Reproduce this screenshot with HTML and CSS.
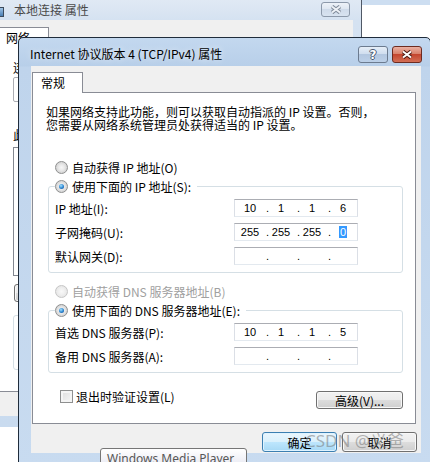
FILE: index.html
```html
<!DOCTYPE html>
<html lang="zh-CN">

<head>
    <meta charset="UTF-8">
    <meta name="viewport" content="width=device-width, initial-scale=1.0">
    <title>Internet 协议版本 4 (TCP/IPv4) 属性</title>
    <link rel="stylesheet" href="styles.css">
</head>

<body>
    <div class="desktop">
        <!-- window behind: 本地连接 属性 -->
        <div class="window back-window">
            <div class="titlebar">
                <span class="app-icon"></span>
                <span class="title">本地连接 属性</span>
                <span class="cap-btn cap-close inactive">
                    <svg width="12" height="9" viewBox="0 0 12 9">
                        <path d="M2 1.5 L10 7.5 M10 1.5 L2 7.5" stroke="#7f8a99" stroke-width="4" />
                        <path d="M2 1.5 L10 7.5 M10 1.5 L2 7.5" stroke="#eef2f7" stroke-width="2" />
                    </svg>
                </span>
            </div>
            <div class="client">
                <div class="tabs">
                    <div class="tab active">网络</div>
                </div>
                <div class="tab-panel back-panel">
                    <div class="line">连接时使用:</div>
                    <div class="textbox"></div>
                    <div class="line gap-26">此连接使用下列项目(O):</div>
                    <div class="listbox"></div>
                    <div class="button small">安装(N)...</div>
                    <div class="plain-group"></div>
                </div>
            </div>
        </div>

        <div class="window side-window"></div>

        <!-- front dialog -->
        <div class="window dialog">
            <div class="titlebar">
                <span class="title">Internet 协议版本 4 (TCP/IPv4) 属性</span>
                <span class="cap-btn cap-help">?</span>
                <span class="cap-btn cap-close">
                    <svg width="12" height="9" viewBox="0 0 12 9">
                        <path d="M2 1.5 L10 7.5 M10 1.5 L2 7.5" stroke="#4d1a12" stroke-width="4" />
                        <path d="M2 1.5 L10 7.5 M10 1.5 L2 7.5" stroke="#ffffff" stroke-width="2" />
                    </svg>
                </span>
            </div>
            <div class="client">
                <div class="tabs">
                    <div class="tab active">常规</div>
                </div>
                <div class="tab-panel">
                    <p class="intro">如果网络支持此功能，则可以获取自动指派的 IP 设置。否则，<br>您需要从网络系统管理员处获得适当的 IP 设置。</p>

                    <label class="radio-row first"><span class="radio"></span>自动获得 IP 地址(O)</label>
                    <fieldset class="group">
                        <legend><label class="radio-row"><span class="radio checked"></span>使用下面的 IP 地址(S):</label></legend>
                        <div class="field-row">
                            <span class="field-label">IP 地址(I):</span>
                            <div class="ip-box"><span class="octet">10</span><span class="dot">.</span><span class="octet">1</span><span class="dot">.</span><span class="octet">1</span><span class="dot">.</span><span class="octet">6</span></div>
                        </div>
                        <div class="field-row">
                            <span class="field-label">子网掩码(U):</span>
                            <div class="ip-box"><span class="octet">255</span><span class="dot">.</span><span class="octet">255</span><span class="dot">.</span><span class="octet">255</span><span class="dot">.</span><span class="octet"><span class="selected">0</span></span></div>
                        </div>
                        <div class="field-row">
                            <span class="field-label">默认网关(D):</span>
                            <div class="ip-box"><span class="octet"></span><span class="dot">.</span><span class="octet"></span><span class="dot">.</span><span class="octet"></span><span class="dot">.</span><span class="octet"></span></div>
                        </div>
                    </fieldset>

                    <label class="radio-row after-group disabled"><span class="radio"></span>自动获得 DNS 服务器地址(B)</label>
                    <fieldset class="group">
                        <legend><label class="radio-row"><span class="radio checked"></span>使用下面的 DNS 服务器地址(E):</label></legend>
                        <div class="field-row">
                            <span class="field-label">首选 DNS 服务器(P):</span>
                            <div class="ip-box"><span class="octet">10</span><span class="dot">.</span><span class="octet">1</span><span class="dot">.</span><span class="octet">1</span><span class="dot">.</span><span class="octet">5</span></div>
                        </div>
                        <div class="field-row">
                            <span class="field-label">备用 DNS 服务器(A):</span>
                            <div class="ip-box"><span class="octet"></span><span class="dot">.</span><span class="octet"></span><span class="dot">.</span><span class="octet"></span><span class="dot">.</span><span class="octet"></span></div>
                        </div>
                    </fieldset>

                    <div class="options-row">
                        <label class="check-row"><span class="checkbox"></span>退出时验证设置(L)</label>
                        <div class="button advanced">高级(V)...</div>
                    </div>
                </div>
                <div class="dialog-buttons">
                    <div class="button default">确定</div>
                    <div class="button">取消</div>
                </div>
            </div>
        </div>

        <div class="tooltip">Windows Media Player</div>
        <div class="watermark">CSDN @义爸</div>
    </div>
</body>

</html>
```

FILE: styles.css
```css
* {
    box-sizing: border-box;
}

body {
    margin: 0;
    background: #fff;
    font-family: "Noto Sans CJK SC", sans-serif;
    font-size: 12px;
    color: #000;
}

.desktop {
    position: relative;
    width: 430px;
    height: 462px;
    overflow: hidden;
}

.window {
    position: absolute;
}

/* ---------- shared bits ---------- */

.titlebar {
    display: flex;
    align-items: flex-start;
}

.title {
    flex: 1;
    white-space: nowrap;
    line-height: 16px;
}

.cap-btn {
    display: flex;
    align-items: center;
    justify-content: center;
    flex: none;
    border-radius: 3px;
}

.tabs {
    display: flex;
    position: relative;
    z-index: 1;
    margin-bottom: -1px;
}

.tab {
    height: 21px;
    background: #fff;
    border: 1px solid #898c95;
    border-bottom: none;
    line-height: 19px;
}

.tab-panel {
    background: #fff;
    border: 1px solid #898c95;
}

.button {
    display: flex;
    align-items: center;
    justify-content: center;
    border: 1px solid #707070;
    border-radius: 3px;
    background: linear-gradient(#f2f2f2, #ebebeb 50%, #dddddd 50%, #cfcfcf);
    box-shadow: inset 0 0 0 1px #f8f8f8;
    white-space: nowrap;
}

.button.default {
    border-color: #3c7fb1;
    background: linear-gradient(#eaf6fd, #d9f0fc 50%, #bee6fd 50%, #a7d9f5);
    box-shadow: inset 0 0 0 1px #dff3ff;
}

/* ---------- back window ---------- */

.back-window {
    left: -16px;
    top: 0;
    width: 378px;
    height: 427px;
    z-index: 1;
    background: linear-gradient(#e0e9f4, #d5e2f1 20px, #c9dbef);
    border-right: 1px solid #4f5866;
}

.back-window .titlebar {
    height: 20px;
    padding: 2px 11px 0 4px;
}

.app-icon {
    width: 16px;
    height: 10px;
    margin-top: 5px;
    border: 1px solid #3b4a5c;
    background: linear-gradient(#9ec3e6, #4a7fb4);
}

.back-window .title {
    margin-left: 10px;
    color: #4a4a4a;
}

.back-window .cap-btn {
    width: 29px;
    height: 15px;
    border: 1px solid #8c99aa;
    background: linear-gradient(#edf2f8, #dde6f1 50%, #cfdbea 50%, #d8e3f0);
}

.back-window .client {
    margin: 0 8px;
    height: 396px;
    background: #f0f0f0;
    padding: 7px 2px 0;
}

.back-window .tab {
    width: 55px;
    padding-left: 11px;
}

.back-panel {
    height: 345px;
    padding: 13px 0 0 18px;
}

.back-panel .line {
    line-height: 13px;
}

.back-panel .gap-26 {
    margin-top: 26px;
}

.back-panel .textbox {
    width: 300px;
    height: 25px;
    margin-top: 3px;
    border: 1px solid #abadb3;
    border-radius: 2px;
}

.back-panel .listbox {
    width: 320px;
    height: 129px;
    margin-top: 6px;
    border: 1px solid #828790;
}

.back-panel .small {
    width: 80px;
    height: 18px;
    margin: 8px 0 0 1px;
}

.back-panel .plain-group {
    width: 320px;
    height: 55px;
    margin-top: 13px;
    border: 1px solid #d5dfe5;
    border-radius: 3px;
}

.side-window {
    left: 362px;
    top: 0;
    width: 68px;
    height: 40px;
    background: #fff;
    border-top: 5px solid #cddef1;
}

/* ---------- front dialog ---------- */

.dialog {
    left: 18px;
    top: 37px;
    width: 413px;
    height: 432px;
    z-index: 2;
    display: flex;
    flex-direction: column;
    border: 1px solid #1f2c3b;
    border-radius: 5px 5px 0 0;
    background: linear-gradient(#c3d8ef, #b8cfe9 28px, #bfd4ec 29px, #c8dbf0);
}

.dialog .titlebar {
    height: 28px;
    padding: 8px 8px 0 11px;
}

.dialog .title {
    text-shadow: 0 0 6px rgba(255, 255, 255, 0.8);
}

.dialog .cap-btn {
    width: 30px;
    height: 17px;
}

.cap-help {
    border: 1px solid #6c7b8f;
    background: linear-gradient(#e6eef7, #d0deef 45%, #b3c7e0 50%, #bcd0e8);
    color: #fff;
    font-family: "DejaVu Sans", sans-serif;
    font-weight: bold;
    font-size: 12px;
    text-shadow: 1px 0 0 #4a5970, -1px 0 0 #4a5970, 0 1px 0 #4a5970, 0 -1px 0 #4a5970;
}

.cap-close {
    margin-left: 4px;
    border: 1px solid #6d2b20;
    background: linear-gradient(#eab0a2, #d9826c 45%, #c4462f 50%, #d36f55);
}

.dialog .client {
    margin: 0 9px 0 12px;
    height: 387px;
    background: #f0f0f0;
    padding: 6px 0 0 1px;
}

.dialog .tab {
    width: 51px;
    padding-left: 8px;
}

.dialog .tab-panel {
    width: 384px;
    height: 332px;
    padding-top: 12px;
}

.intro {
    margin: 0 0 0 13px;
    line-height: 13px;
    white-space: nowrap;
}

.radio-row {
    display: flex;
    align-items: center;
    height: 19px;
    white-space: nowrap;
}

.radio-row.first {
    margin: 27px 0 0 22px;
}

.radio-row.after-group {
    margin: 9px 0 0 22px;
}

.radio-row.disabled {
    color: #a0a0a0;
}

.radio {
    position: relative;
    width: 13px;
    height: 13px;
    margin-right: 4px;
    flex: none;
    border: 1px solid #8e8f8f;
    border-radius: 50%;
    background: radial-gradient(circle, #f6f6f6 0, #eaeaea 35%, #cfcfcf 80%);
}

.radio.checked::after {
    content: "";
    position: absolute;
    left: 3px;
    top: 3px;
    width: 5px;
    height: 5px;
    border-radius: 50%;
    background: radial-gradient(circle at 40% 35%, #a6e1ff, #2a85d0 55%, #0d3f86);
}

.disabled .radio {
    border-color: #c6c6c6;
    background: radial-gradient(circle, #f8f8f8 0, #f0f0f0 40%, #e4e4e4 80%);
}

.group {
    margin: 0 0 0 15px;
    width: 355px;
    padding: 0 0 4px 6px;
    border: 1px solid #d5dfe5;
    border-radius: 3px;
}

.group legend {
    padding: 0 6px 0 0;
}

.field-row {
    display: flex;
    align-items: center;
    height: 24px;
}

.field-label {
    width: 179px;
    white-space: nowrap;
}

.ip-box {
    display: flex;
    align-items: center;
    width: 124px;
    height: 18px;
    padding-left: 3px;
    border: 1px solid #dbdfe6;
    border-top-color: #abadb3;
    border-bottom-color: #e3e9ef;
    background: #fff;
    font-family: "Liberation Sans", sans-serif;
    font-size: 11px;
}

.octet {
    width: 24px;
    text-align: center;
}

.dot {
    width: 7px;
    text-align: right;
}

.selected {
    background: #3399ff;
    color: #fff;
    padding: 0 1px;
}

.options-row {
    display: flex;
    justify-content: space-between;
    align-items: flex-start;
    margin: 14px 12px 0 27px;
}

.check-row {
    display: flex;
    align-items: center;
    height: 19px;
}

.checkbox {
    width: 13px;
    height: 13px;
    margin-right: 3px;
    border: 1px solid #8e8f8f;
    background: linear-gradient(135deg, #dcdcdc, #f6f6f6);
    box-shadow: inset 0 0 0 2px #f4f4f4;
}

.advanced {
    width: 87px;
    height: 18px;
    margin-top: 4px;
}

.dialog-buttons {
    display: flex;
    justify-content: flex-end;
    gap: 5px;
    margin-top: 8px;
    padding-right: 4px;
}

.dialog-buttons .button {
    width: 75px;
    height: 20px;
}

/* ---------- overlays ---------- */

.tooltip {
    position: absolute;
    left: 100px;
    top: 448px;
    z-index: 3;
    width: 147px;
    height: 22px;
    padding: 1px 0 0 6px;
    border: 1px solid #767676;
    border-radius: 3px;
    background: linear-gradient(#ffffff, #e4e5f0);
    color: #575757;
    font-family: "Noto Sans", sans-serif;
    font-size: 12px;
    line-height: 18px;
    white-space: nowrap;
}

.watermark {
    position: absolute;
    left: 305px;
    top: 428px;
    z-index: 4;
    color: rgba(120, 120, 120, 0.55);
    font-family: "Noto Sans", "Noto Sans CJK SC", sans-serif;
    font-size: 17px;
    line-height: 26px;
    white-space: nowrap;
}
```
